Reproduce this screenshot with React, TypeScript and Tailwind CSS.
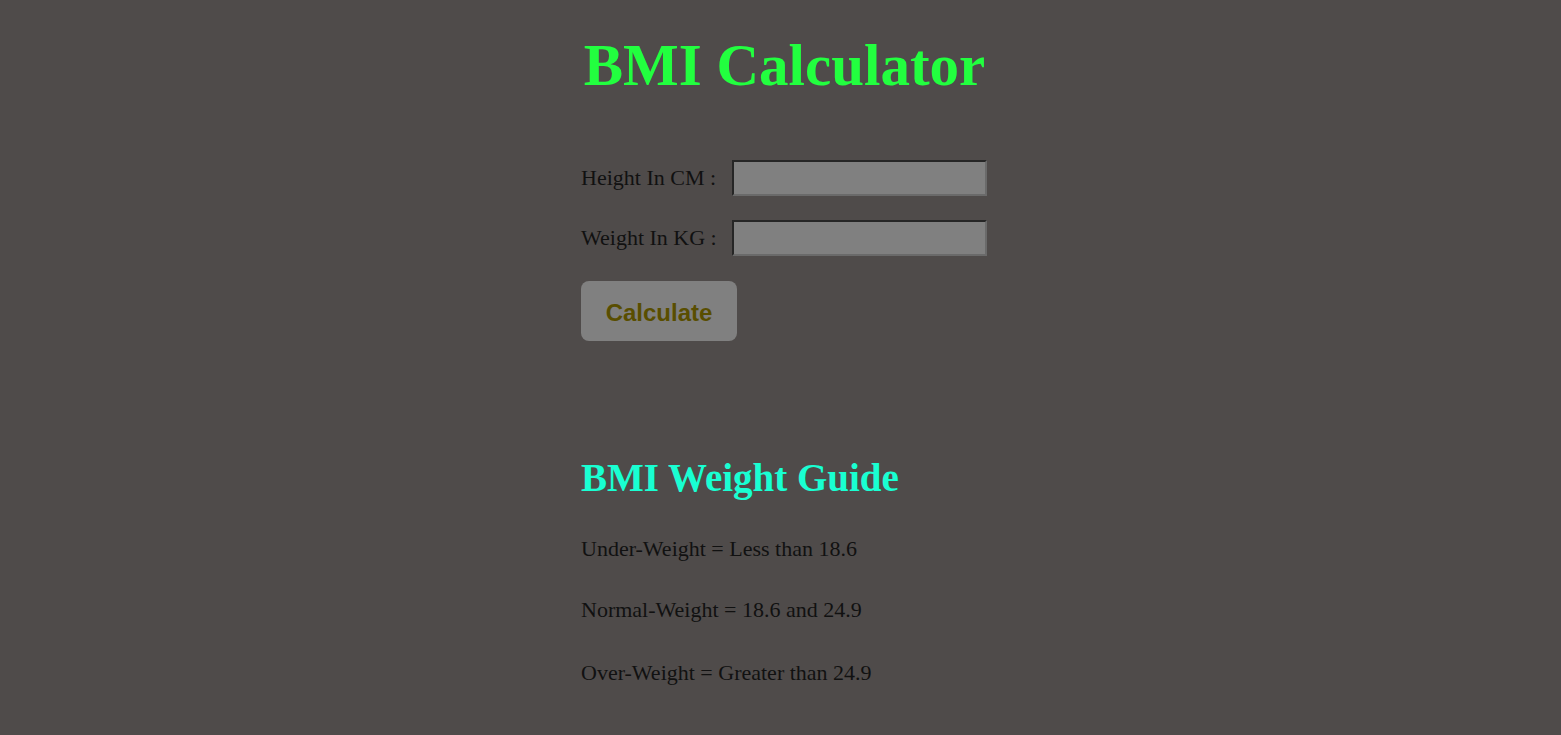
import React, { useState } from 'react';

export default function App() {
  const [height, setHeight] = useState('');
  const [weight, setWeight] = useState('');

  return (
    <div className="min-h-[735px] w-full bg-[#4f4b4a] font-['Liberation_Serif','Times_New_Roman',serif] text-[#111]">
      <h1 className="pl-[8px] pt-[27px] text-center text-[59px] font-bold leading-[76px] text-[#22ff3f]">
        BMI Calculator
      </h1>

      <div className="ml-[581px] w-[406px] pt-[57px]">
        <div className="flex items-center">
          <label className="w-[151px] shrink-0 whitespace-nowrap text-[22px] leading-[24px]">Height In CM :</label>
          <input
            value={height}
            onChange={(e) => setHeight(e.target.value)}
            className="h-[36px] w-[255px] border-2 border-t-[#262626] border-l-[#262626] border-b-[#6a6a6a] border-r-[#6a6a6a] bg-[#808080] px-1 outline-none"
          />
        </div>
        <div className="mt-[24px] flex items-center">
          <label className="w-[151px] shrink-0 whitespace-nowrap text-[22px] leading-[24px]">Weight In KG :</label>
          <input
            value={weight}
            onChange={(e) => setWeight(e.target.value)}
            className="h-[36px] w-[255px] border-2 border-t-[#262626] border-l-[#262626] border-b-[#6a6a6a] border-r-[#6a6a6a] bg-[#808080] px-1 outline-none"
          />
        </div>
        <button className="mt-[25px] h-[60px] w-[156px] rounded-[8px] bg-[#808080] pt-[4px] font-['Liberation_Sans',Arial,sans-serif] text-[24px] font-bold text-[#594e00]">
          Calculate
        </button>

        <h2 className="mt-[115px] text-[39px] font-bold leading-[44px] text-[#19ffd2]">
          BMI Weight Guide
        </h2>
        <p className="mt-[37px] text-[22px] leading-[24px]">Under-Weight = Less than 18.6</p>
        <p className="mt-[37px] text-[22px] leading-[24px]">Normal-Weight = 18.6 and 24.9</p>
        <p className="mt-[39px] text-[22px] leading-[24px]">Over-Weight = Greater than 24.9</p>
      </div>
    </div>
  );
}
